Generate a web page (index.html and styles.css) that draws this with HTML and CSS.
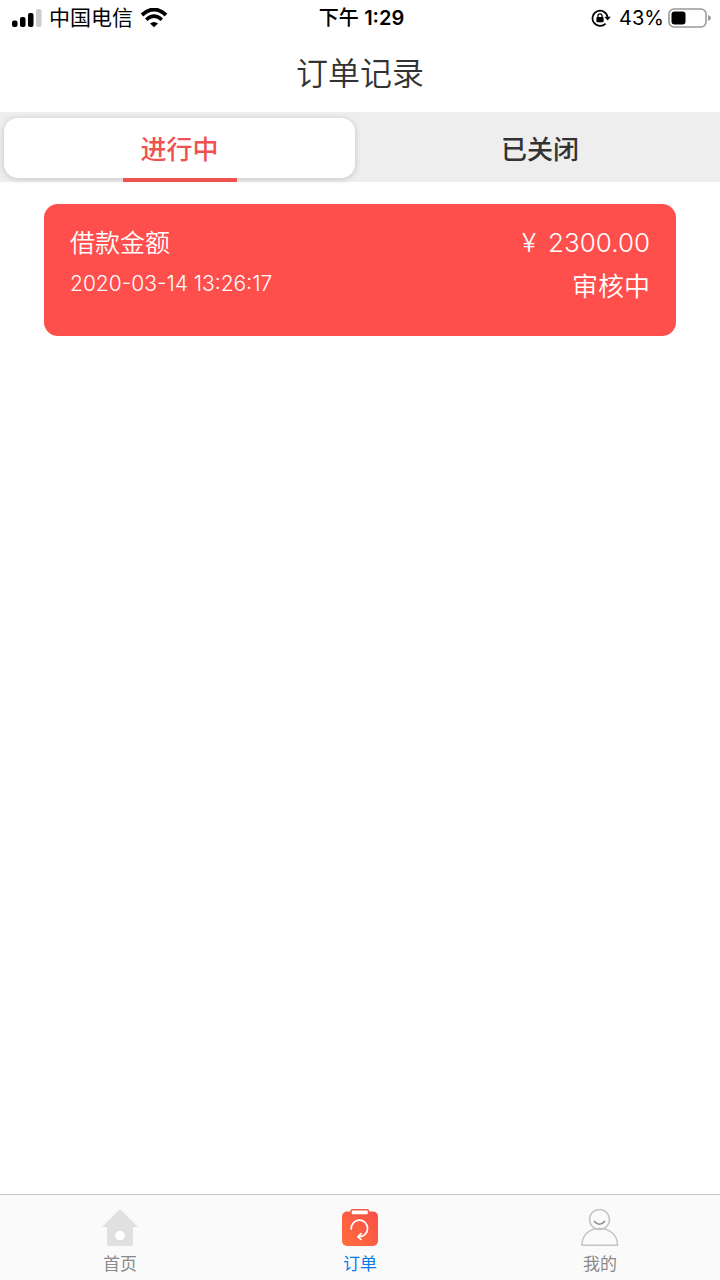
FILE: index.html
```html
<!DOCTYPE html>
<html lang="zh-CN">
  <head>
    <meta charset="UTF-8" />
    <meta name="viewport" content="width=device-width, initial-scale=1.0" />
    <title>订单记录</title>
    <link rel="stylesheet" href="styles.css">
  </head>
  <body>
    <div class="status-bar">
      <div class="status-left">
        <svg class="icon-signal" width="30" height="20" viewBox="0 0 30 20">
          <rect x="0" y="12.5" width="5.5" height="6.5" rx="2" />
          <rect x="8" y="9" width="5.5" height="10" rx="2" />
          <rect x="16" y="5" width="5.5" height="14" rx="2" />
          <rect x="24" y="1" width="5.5" height="18" rx="2" fill="#ccc" />
        </svg>
        <span>中国电信</span>
        <svg class="icon-wifi" width="28" height="20" viewBox="0 0 28 20">
          <path d="M2 7 Q14 -4 26 7" fill="none" stroke="#000" stroke-width="3.8" />
          <path d="M6.2 11.7 Q14 4.5 21.8 11.7" fill="none" stroke="#000" stroke-width="3.4" />
          <path d="M10 15.5 Q14 12.3 18 15.5 L14 19.3 Z" />
        </svg>
      </div>
      <div class="status-time">下午 <b>1:29</b></div>
      <div class="status-right">
        <svg class="icon-lock" width="20" height="20" viewBox="0 0 20 20">
          <path d="M14.6 15.6 A7.6 7.6 0 1 1 16.6 9" fill="none" stroke="#000" stroke-width="1.7" />
          <path d="M13.4 8.8 H19.8 L16.6 12.6 Z" />
          <rect x="5.4" y="9" width="7.2" height="5.2" rx="1" />
          <path d="M7 9 V7.8 A2 2 0 0 1 11 7.8 V9" fill="none" stroke="#000" stroke-width="1.3" />
        </svg>
        <span class="battery-level">43%</span>
        <svg class="icon-battery" width="43" height="20" viewBox="0 0 43 20">
          <rect x="1" y="1" width="37" height="18" rx="5" fill="none" stroke="#999" stroke-width="1.6" />
          <rect x="3.5" y="3.5" width="14" height="13" rx="3" />
          <path d="M40 7 Q43 8 43 10 Q43 12 40 13 Z" fill="#999" />
        </svg>
      </div>
    </div>

    <header>
      <h1 class="page-title">订单记录</h1>
    </header>

    <div class="tabs" role="tablist">
      <button class="tab active" role="tab" aria-selected="true">进行中</button>
      <button class="tab" role="tab" aria-selected="false">已关闭</button>
      <span class="tab-line"></span>
    </div>

    <main>
      <section class="order-card">
        <div class="order-info">
          <p class="order-label">借款金额</p>
          <p class="order-date">2020-03-14 13:26:17</p>
        </div>
        <div class="order-result">
          <p class="order-amount"><span>¥</span><span>2300.00</span></p>
          <p class="order-status">审核中</p>
        </div>
      </section>
    </main>

    <nav class="bottom-nav">
      <a href="#home" class="nav-item">
        <svg width="38" height="38" viewBox="0 0 38 38">
          <path d="M19 0 L37 18 H32 V35 Q32 37 30 37 H8 Q6 37 6 35 V18 H1 Z" fill="#e0e0e0" />
          <circle cx="19" cy="26.5" r="4.8" fill="#fff" />
        </svg>
        <span>首页</span>
      </a>
      <a href="#orders" class="nav-item current">
        <svg width="38" height="38" viewBox="0 0 38 38">
          <defs>
            <linearGradient id="clipboard" x1="0" y1="1" x2="1" y2="0">
              <stop offset="0" stop-color="#ff6e3c" />
              <stop offset="1" stop-color="#f94e48" />
            </linearGradient>
          </defs>
          <rect x="1" y="2.5" width="36" height="34.5" rx="5" fill="url(#clipboard)" />
          <rect x="10" y="0.8" width="17.5" height="5.2" rx="1.5" fill="#fff" stroke="#ef5b46" stroke-width="1.5" />
          <path d="M10.2 20 A8.2 8.2 0 1 1 18.5 27.6" fill="none" stroke="#fff" stroke-width="1.7" stroke-linecap="round" />
          <path d="M20 24.6 L16.8 27.8 L20 30.4" fill="none" stroke="#fff" stroke-width="1.7" stroke-linecap="round" stroke-linejoin="round" />
        </svg>
        <span>订单</span>
      </a>
      <a href="#mine" class="nav-item">
        <svg width="38" height="38" viewBox="0 0 38 38" fill="none" stroke="#c4c4c4" stroke-width="1.5">
          <circle cx="18.5" cy="10.5" r="10" />
          <path d="M1 36.2 C1 26 8 19.5 18.5 19.5 C29 19.5 36.5 26 36.5 36.2 Z" />
          <path d="M13 12 Q18.5 18.5 24 12" stroke="#888" />
        </svg>
        <span>我的</span>
      </a>
    </nav>
  </body>
</html>
```
FILE: styles.css
```css
* {
  margin: 0;
  padding: 0;
  box-sizing: border-box;
}

body {
  background-color: #fff;
  min-height: 100vh;
  display: flex;
  flex-direction: column;
  font-family: Inter, "Noto Sans CJK SC", sans-serif;
  color: #333;
}

/* Status bar */
.status-bar {
  height: 36px;
  padding: 0 9px 0 12px;
  display: grid;
  grid-template-columns: 1fr auto 1fr;
  align-items: center;
  font-size: 21px;
  line-height: 36px;
  color: #000;
}

.status-left,
.status-right {
  display: flex;
  align-items: center;
  gap: 7px;
}

.status-right {
  justify-content: flex-end;
  gap: 4px;
}

.icon-lock {
  margin-right: 4px;
}

.battery-level {
  font-size: 20px;
}

.status-time {
  font-size: 20px;
  font-weight: 500;
}

.status-time b {
  font-weight: 600;
}

header {
  height: 76px;
  text-align: center;
}

.page-title {
  font-size: 32px;
  line-height: 76px;
  font-weight: 350;
}

/* Tabs */
.tabs {
  position: relative;
  display: grid;
  grid-template-columns: 1fr 1fr;
  height: 70px;
  padding: 6px 0 4px;
  background-color: #eee;
}

.tab {
  border: none;
  background: none;
  padding-bottom: 2px;
  font-family: inherit;
  font-size: 26px;
  font-weight: 500;
  color: #333;
  cursor: pointer;
}

.tab.active {
  margin: 0 5px 0 4px;
  background-color: #fff;
  border-radius: 14px;
  box-shadow: 0 1px 6px rgba(0, 0, 0, 0.18);
  color: #ee5350;
}

.tab-line {
  position: absolute;
  left: 25%;
  bottom: 0;
  width: 114px;
  height: 4px;
  background-color: #ee5350;
  transform: translateX(-50%);
}

main {
  flex: 1;
  padding: 22px 44px;
}

/* Order card */
.order-card {
  display: flex;
  justify-content: space-between;
  min-height: 132px;
  padding: 18px 26px;
  border-radius: 14px;
  background-color: #ff4f4d;
  color: #fff;
  font-weight: 350;
}

.order-label {
  font-size: 25px;
  line-height: 42px;
}

.order-date {
  font-size: 21px;
  line-height: 40px;
}

.order-result {
  text-align: right;
}

.order-amount {
  display: flex;
  justify-content: flex-end;
  gap: 12px;
  font-size: 26px;
  line-height: 42px;
}

.order-status {
  font-size: 26px;
  line-height: 46px;
}

/* Bottom navigation */
.bottom-nav {
  display: grid;
  grid-template-columns: repeat(3, 1fr);
  height: 86px;
  padding-top: 14px;
  border-top: 1px solid #c8c8c8;
  background-color: #fafafa;
}

.nav-item {
  display: flex;
  flex-direction: column;
  align-items: center;
  font-size: 17px;
  line-height: 34px;
  color: #8a8a8a;
  text-decoration: none;
}

.nav-item.current {
  color: #0a7aea;
}
```
